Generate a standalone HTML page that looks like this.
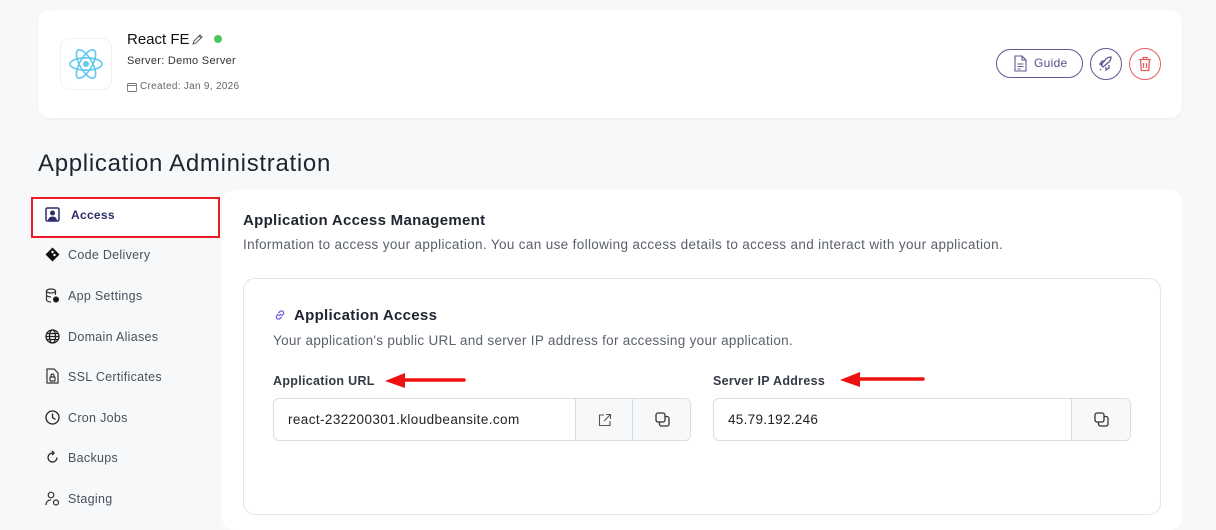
<!DOCTYPE html>
<html><head><meta charset="utf-8"><style>
*{box-sizing:border-box;margin:0;padding:0}
body{width:1216px;height:524px;overflow:hidden;background:#f7f8fa;font-family:"Liberation Sans",sans-serif;color:#1f2430;position:relative;letter-spacing:.3px}
.abs{position:absolute}
.card{position:absolute;background:#fff;border-radius:12px}
.t{position:absolute;white-space:nowrap}
.side .t{font-size:12.5px;color:#4a4f5c;left:68px}
.side svg{position:absolute;left:45px}
.inp{position:absolute;height:43px;border:1px solid #d9dce2;border-radius:6px;background:#fff;overflow:hidden}
.btn{position:absolute;top:0;height:41px;background:#f7f8fa;border-left:1px solid #d9dce2;display:flex;align-items:center;justify-content:center}
</style></head><body>
<div class="card" style="left:38px;top:10px;width:1144px;height:108px;box-shadow:0 1px 3px rgba(0,0,0,.05)"></div>
<div class="abs" style="left:60px;top:38px;width:52px;height:52px;border:1px solid #eef0f3;border-radius:10px;background:#fff"></div>
<svg class="abs" style="left:68px;top:46px" width="36" height="36" viewBox="-18 -18 36 36" fill="none" stroke="#61c8f0" stroke-width="1.6"><ellipse rx="16" ry="6.2"/><ellipse rx="16" ry="6.2" transform="rotate(60)"/><ellipse rx="16" ry="6.2" transform="rotate(120)"/><circle r="3" fill="#61c8f0" stroke="none"/></svg>
<div class="t" style="left:127px;top:31px;font-size:15px;color:#111;letter-spacing:0">React FE</div>
<svg class="abs" style="left:191px;top:34px" width="12" height="12" viewBox="0 0 12 12" fill="none" stroke="#555" stroke-width="1"><path d="M2 10l1-3 6-6 2 2-6 6z M8 2l2 2"/></svg>
<div class="abs" style="left:214px;top:35px;width:8px;height:8px;border-radius:50%;background:#4cc45c"></div>
<div class="t" style="left:127px;top:55px;font-size:11px;color:#333">Server: Demo Server</div>
<svg class="abs" style="left:127px;top:82px" width="10" height="10" viewBox="0 0 10 10" fill="none" stroke="#777" stroke-width="0.9"><rect x="0.5" y="1.5" width="9" height="8" rx="1"/><path d="M0.5 3.5h9"/></svg>
<div class="t" style="left:140px;top:81px;font-size:10px;color:#666">Created: Jan 9, 2026</div>
<div class="abs" style="left:996px;top:49px;width:87px;height:29px;border:1.3px solid #5b5b92;border-radius:15px"></div>
<svg class="abs" style="left:1014px;top:55px" width="13" height="17" viewBox="0 0 13 17" fill="none" stroke="#5b5b92" stroke-width="1.1"><path d="M1 1h7l4 4v11H1z M8 1v4h4 M3.5 9h6 M3.5 11.5h6 M3.5 14h3"/></svg>
<div class="t" style="left:1034px;top:56px;font-size:12px;color:#4f4f85">Guide</div>
<div class="abs" style="left:1090px;top:48px;width:32px;height:32px;border:1.3px solid #5b5b92;border-radius:50%"></div>
<svg class="abs" style="left:1098px;top:56px" width="16" height="16" viewBox="0 0 16 16" fill="none" stroke="#5b5b92" stroke-width="1.3"><path d="M5 11l-2-2 5-6c2-2 5-2 5-2s0 3-2 5l-6 5z M5 8H2l2-3h3 M8 11v3l3-2V9 M3 13l-1 1"/></svg>
<div class="abs" style="left:1129px;top:48px;width:32px;height:32px;border:1.3px solid #e65b63;border-radius:50%"></div>
<svg class="abs" style="left:1138px;top:56px" width="14" height="16" viewBox="0 0 14 16" fill="none" stroke="#e65b63" stroke-width="1.3"><path d="M1 3.5h12 M5 3.5V1.5h4v2 M2.5 3.5l.8 11h7.4l.8-11 M5.5 7v5 M8.5 7v5"/></svg>

<div class="t" style="left:38px;top:150px;font-size:24px;color:#1f2430;letter-spacing:.7px">Application Administration</div>

<div class="side">
<div class="abs" style="left:31px;top:197px;width:189px;height:41px;border:2.5px solid #ee1c24;background:#fff"></div>
<svg style="top:207px" width="15" height="15" viewBox="0 0 15 15"><rect x="1" y="1" width="13" height="13" rx="1.5" fill="none" stroke="#2d2d6b" stroke-width="1.5"/><circle cx="7.5" cy="6" r="2.5" fill="#2d2d6b"/><path d="M3 14c0-3 2-4.5 4.5-4.5S12 11 12 14z" fill="#2d2d6b"/></svg>
<div class="t" style="left:71px;top:208px;font-size:12px;font-weight:bold;color:#2d2d6b">Access</div>
<svg style="top:247px" width="15" height="15" viewBox="0 0 15 15"><path d="M7.5 0.5l7 7-7 7-7-7z" fill="#111"/><circle cx="7.5" cy="5" r="1.2" fill="#fff"/><circle cx="9.5" cy="8" r="1.2" fill="#fff"/></svg>
<div class="t" style="top:248px">Code Delivery</div>
<svg style="top:288px" width="15" height="15" viewBox="0 0 15 15" fill="none" stroke="#333" stroke-width="1.2"><ellipse cx="6" cy="3" rx="4.5" ry="2"/><path d="M1.5 3v9c0 1 2 2 4.5 2 M10.5 3v4 M1.5 7c0 1 2 2 4.5 2"/><circle cx="11" cy="11.5" r="2.5" fill="#111"/></svg>
<div class="t" style="top:289px">App Settings</div>
<svg style="top:329px" width="15" height="15" viewBox="0 0 15 15" fill="none" stroke="#222" stroke-width="1.3"><circle cx="7.5" cy="7.5" r="6.5"/><ellipse cx="7.5" cy="7.5" rx="3" ry="6.5"/><path d="M1 7.5h13 M2 4.5h11 M2 10.5h11"/></svg>
<div class="t" style="top:330px">Domain Aliases</div>
<svg style="top:368px" width="15" height="16" viewBox="0 0 15 16" fill="none" stroke="#333" stroke-width="1.2"><path d="M2 1h7l4 4v10H2z"/><rect x="5" y="9" width="5" height="4" rx=".5"/><path d="M6 9V7.5a1.5 1.5 0 013 0V9"/></svg>
<div class="t" style="top:370px">SSL Certificates</div>
<svg style="top:410px" width="15" height="15" viewBox="0 0 15 15" fill="none" stroke="#222" stroke-width="1.3"><circle cx="7.5" cy="7.5" r="6.5"/><path d="M7.5 3.5v4l3 2"/></svg>
<div class="t" style="top:411px">Cron Jobs</div>
<svg style="top:450px" width="15" height="15" viewBox="0 0 15 15" fill="none" stroke="#222" stroke-width="1.3"><path d="M12 7.5A4.5 4.5 0 117.5 3 M7 1l2 2-2 2"/></svg>
<div class="t" style="top:451px">Backups</div>
<svg style="top:491px" width="15" height="15" viewBox="0 0 15 15" fill="none" stroke="#333" stroke-width="1.2"><circle cx="6" cy="4" r="2.8"/><path d="M1 14c0-3 2-5 5-5"/><circle cx="11" cy="11.5" r="2.5"/></svg>
<div class="t" style="top:492px">Staging</div>
</div>

<div class="card" style="left:222px;top:190px;width:960px;height:340px"></div>
<div class="t" style="left:243px;top:212px;font-size:15px;font-weight:bold;color:#1f2430">Application Access Management</div>
<div class="t" style="left:243px;top:237px;font-size:13.5px;color:#5a606c;letter-spacing:.35px">Information to access your application. You can use following access details to access and interact with your application.</div>
<div class="abs" style="left:243px;top:278px;width:918px;height:237px;border:1px solid #e3e5ea;border-radius:12px;background:#fff"></div>
<svg class="abs" style="left:274px;top:309px" width="12" height="12" viewBox="0 0 12 12" fill="none" stroke="#7b5ce6" stroke-width="1.3"><path d="M5 7l2-2 M4.5 5L3 6.5a2 2 0 003 3L7.5 8 M7.5 7L9 5.5a2 2 0 00-3-3L4.5 4"/></svg>
<div class="t" style="left:294px;top:307px;font-size:15px;font-weight:bold;color:#1f2430">Application Access</div>
<div class="t" style="left:273px;top:333px;font-size:13.5px;color:#5a606c;letter-spacing:.3px">Your application's public URL and server IP address for accessing your application.</div>
<div class="t" style="left:273px;top:374px;font-size:12.5px;font-weight:bold;color:#333845">Application URL</div>
<div class="t" style="left:713px;top:374px;font-size:12.5px;font-weight:bold;color:#333845">Server IP Address</div>
<svg class="abs" style="left:0;top:370px" width="1000" height="22"><path d="M402 10h62" stroke="#ee1111" stroke-width="3.5" stroke-linecap="round"/><path d="M385 11l20-8v15z" fill="#ee1111"/><path d="M857 9h66" stroke="#ee1111" stroke-width="3.5" stroke-linecap="round"/><path d="M840 10l20-8v15z" fill="#ee1111"/></svg>
<div class="inp" style="left:273px;top:398px;width:418px">
<div class="t" style="left:14px;top:13px;font-size:13.5px;color:#222;letter-spacing:.4px">react-232200301.kloudbeansite.com</div>
<div class="btn" style="left:301px;width:58px"><svg width="14" height="14" viewBox="0 0 14 14" fill="none" stroke="#555" stroke-width="1.1"><path d="M6 2H1.5v10.5H12V8 M8 1.5h4.5V6 M12.5 1.5L6 8"/></svg></div>
<div class="btn" style="left:358px;width:60px"><svg width="15" height="15" viewBox="0 0 15 15" fill="none" stroke="#333" stroke-width="1.3"><rect x="1" y="1" width="9" height="9" rx="2"/><path d="M10 4.5h2a2 2 0 012 2V12a2 2 0 01-2 2H6.5a2 2 0 01-2-2v-2"/></svg></div>
</div>
<div class="inp" style="left:713px;top:398px;width:418px">
<div class="t" style="left:14px;top:13px;font-size:13.5px;color:#222">45.79.192.246</div>
<div class="btn" style="left:357px;width:60px"><svg width="15" height="15" viewBox="0 0 15 15" fill="none" stroke="#333" stroke-width="1.3"><rect x="1" y="1" width="9" height="9" rx="2"/><path d="M10 4.5h2a2 2 0 012 2V12a2 2 0 01-2 2H6.5a2 2 0 01-2-2v-2"/></svg></div>
</div>
</body></html>
